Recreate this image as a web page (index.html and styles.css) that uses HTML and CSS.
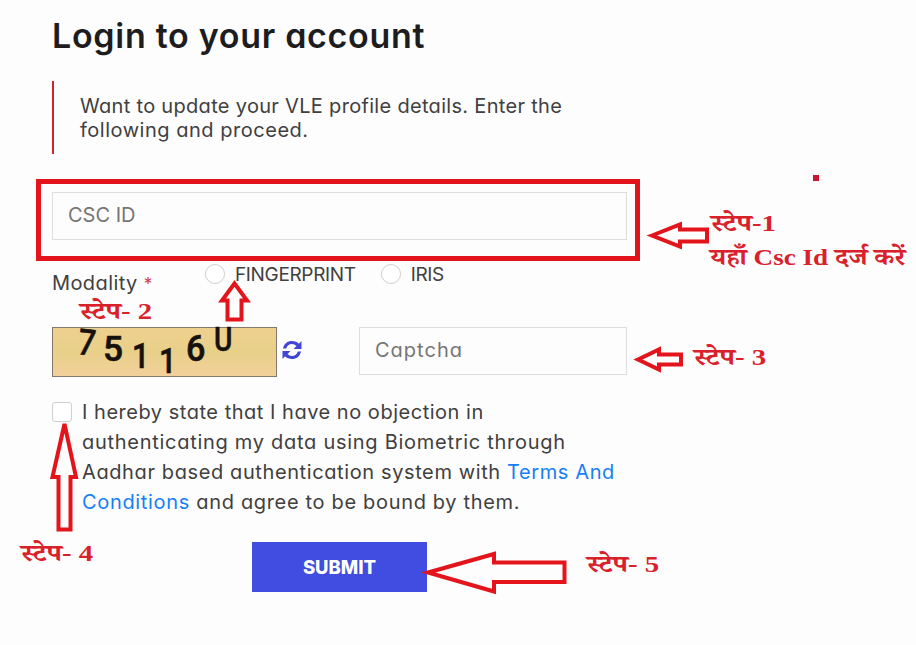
FILE: index.html
```html
<!DOCTYPE html>
<html lang="en">
<head>
    <meta charset="UTF-8">
    <meta name="viewport" content="width=device-width, initial-scale=1.0">
    <title>Login to your account</title>
    <link rel="stylesheet" href="styles.css">
</head>
<body>
    <form class="login-form">
        <h1 class="title">Login to your account</h1>
        <p class="intro">Want to update your VLE profile details. Enter the<br><span class="intro-end">following and proceed.</span></p>

        <input class="field csc-id" type="text" placeholder="CSC ID">

        <div class="modality">
            <span class="modality-label">Modality <span class="required">*</span></span>
            <label class="option"><input class="radio" type="radio" name="modality"><span>FINGERPRINT</span></label>
            <label class="option"><input class="radio" type="radio" name="modality"><span>IRIS</span></label>
        </div>

        <div class="captcha-row">
            <svg class="captcha-image" viewBox="0 0 225 50">
                <defs>
                    <linearGradient id="sand" x1="0" y1="0" x2="0" y2="1">
                        <stop offset="0" stop-color="#efd08f"/>
                        <stop offset="0.5" stop-color="#e8d089"/>
                        <stop offset="1" stop-color="#f3d09b"/>
                    </linearGradient>
                </defs>
                <rect x="0.5" y="0.5" width="224" height="49" fill="url(#sand)" stroke="#85796b"/>
                <g class="digits">
                    <text transform="translate(25 27) rotate(6) scale(.85 1)">7</text>
                    <text transform="translate(51 34) scale(.98 1)">5</text>
                    <text transform="translate(80 41) scale(.85 1)">1</text>
                    <text transform="translate(107 46) scale(.85 1)">1</text>
                    <text transform="translate(134 34) scale(.95 1)">6</text>
                    <text transform="translate(162 24) scale(.78 .92)">U</text>
                </g>
            </svg>
            <svg class="refresh" viewBox="0 0 22 22">
                <path d="M2 9.500C3 4.500 6.500 2 11 2c2.800 0 5.200 1 7 2.800L20.500 2v8h-8l3-3C14.200 5.700 12.800 5 11 5 8 5 6.200 6.700 5.200 9.500zM20 12.500C19 17.500 15.500 20 11 20c-2.800 0-5.200-1-7-2.800L1.500 20v-8h8l-3 3c1.300 1.300 2.700 2 4.500 2 3 0 4.800-1.700 5.800-4.500z"/>
            </svg>
            <input class="field captcha-input" type="text" placeholder="Captcha">
        </div>

        <div class="consent">
            <input class="checkbox" type="checkbox" id="agree">
            <label class="consent-text" for="agree">
                <span class="line line-1">I hereby state that I have no objection in</span>
                <span class="line line-2">authenticating my data using Biometric through</span>
                <span class="line line-3">Aadhar based authentication system with <a class="terms">Terms And</a></span>
                <span class="line line-4"><a class="terms">Conditions</a> and agree to be bound by them.</span>
            </label>
        </div>

        <button class="submit" type="button">SUBMIT</button>
    </form>

    <!-- step markers drawn over the form -->
    <svg class="marks" viewBox="0 0 916 645">
        <rect x="38.500" y="181.500" width="599" height="77" stroke-width="5"/>
        <path d="M652 235.500L680 224.500V229.500H707V241.500H680V246.500Z"/>
        <path d="M234.500 283.500L247 300.500H241.500V319.500H227.500V300.500H222Z"/>
        <path d="M638 359.500L659 349.500V354.500H681V364.500H659V369.500Z"/>
        <path d="M64.500 424L76 477H70.500V529.500H58.500V477H52.500Z"/>
        <path d="M428 572.500L494 554V562.500H564.500V582H494V591.500Z"/>
        <rect class="dot" x="813" y="175" width="6" height="6"/>
    </svg>
    <div class="step step-1" lang="hi">स्टेप-1</div>
    <div class="step step-1-note" lang="hi">यहाँ Csc Id दर्ज करें</div>
    <div class="step step-2" lang="hi">स्टेप- 2</div>
    <div class="step step-3" lang="hi">स्टेप- 3</div>
    <div class="step step-4" lang="hi">स्टेप- 4</div>
    <div class="step step-5" lang="hi">स्टेप- 5</div>
</body>
</html>
```
FILE: styles.css
```css
* {
    box-sizing: border-box;
}
body {
    position: relative;
    width: 916px;
    height: 645px;
    margin: 0;
    overflow: hidden;
    background: #fdfdfd;
    color: #404040;
    font-family: Inter, "Liberation Sans", sans-serif;
    font-feature-settings: "cv11";
    font-size: 20px;
    font-weight: 380;
}
.login-form {
    width: 627px;
    padding: 15px 0 0 52px;
}
.title {
    margin: 0;
    color: #1d1d1f;
    font-size: 34px;
    font-weight: 600;
    letter-spacing: 0.7px;
    line-height: 42px;
    white-space: nowrap;
}
.intro {
    height: 73px;
    margin: 24px 0 0;
    padding: 13px 0 0 26px;
    border-left: 2px solid #d2232e;
    letter-spacing: 0.31px;
    line-height: 24px;
    white-space: nowrap;
}
.intro-end {
    letter-spacing: 0.52px;
}
.field {
    display: block;
    padding: 0 15px 2px;
    border: 1px solid #dedede;
    background: #fdfdfd;
    color: #555;
    font: inherit;
    font-feature-settings: inherit;
}
.field::placeholder {
    color: #757575;
    opacity: 1;
}
.csc-id {
    width: 575px;
    height: 48px;
    margin-top: 38px;
}
.modality {
    display: flex;
    height: 44px;
    margin-top: 22px;
    line-height: 24px;
}
.modality-label {
    width: 153px;
    padding-top: 9px;
    letter-spacing: 0.4px;
}
.required {
    color: #d8364a;
    font-size: 17px;
}
.option {
    display: flex;
    height: 24px;
    margin-right: 25px;
    font-size: 19px;
    letter-spacing: -0.35px;
    line-height: 26px;
}
.radio,
.checkbox {
    flex: none;
    width: 20px;
    height: 20px;
    margin: 2px 10px 0 0;
    appearance: none;
    border: 1px solid #cfcfcf;
    border-radius: 50%;
    background: #fff;
}
.captcha-row {
    display: flex;
    align-items: flex-start;
    margin-top: 21px;
}
.captcha-image {
    width: 225px;
    height: 50px;
    overflow: visible;
}
.digits {
    fill: #17110d;
    stroke: #17110d;
    stroke-width: 0.6px;
    font-family: Roboto, "Liberation Sans", sans-serif;
    font-size: 36px;
    font-weight: 500;
}
.refresh {
    width: 22px;
    height: 22px;
    margin: 12px 0 0 4px;
    fill: #4146d6;
}
.captcha-input {
    width: 268px;
    height: 48px;
    margin-left: auto;
    letter-spacing: 1px;
}
.consent {
    display: flex;
    margin-top: 20px;
}
.checkbox {
    margin: 5px 10px 0 0;
    border-radius: 3px;
}
.line {
    display: block;
    line-height: 30px;
    white-space: nowrap;
}
.line-1 {
    letter-spacing: 0.52px;
}
.line-2 {
    letter-spacing: 0.72px;
}
.line-3 {
    letter-spacing: 0.61px;
}
.line-4 {
    letter-spacing: 0.67px;
}
.terms {
    color: #1580f5;
}
.submit {
    display: block;
    width: 175px;
    height: 50px;
    margin: 25px 0 0 200px;
    border: 0;
    background: #404de0;
    color: #fff;
    font-family: Inter, sans-serif;
    font-size: 18.5px;
    font-weight: 800;
}
.marks {
    position: absolute;
    top: 0;
    left: 0;
    width: 916px;
    height: 645px;
    fill: #fdfdfd;
    stroke: #e3141c;
    stroke-width: 4;
    pointer-events: none;
}
.marks rect {
    fill: none;
}
.marks .dot {
    fill: #c91432;
    stroke: none;
}
.step {
    position: absolute;
    color: #d9212b;
    font-family: "Liberation Serif", "Noto Serif Devanagari", "Noto Sans Devanagari", "Noto Sans", serif;
    font-size: 24px;
    font-weight: bold;
    line-height: 34px;
    white-space: nowrap;
    transform: scaleX(1.2);
    transform-origin: left;
}
.step-1 {
    top: 206px;
    left: 711px;
}
.step-1-note {
    top: 240px;
    left: 710px;
    transform: scaleX(1.13);
}
.step-2 {
    top: 294px;
    left: 80px;
}
.step-3 {
    top: 340px;
    left: 694px;
}
.step-4 {
    top: 536px;
    left: 21px;
}
.step-5 {
    top: 547px;
    left: 587px;
}
```
